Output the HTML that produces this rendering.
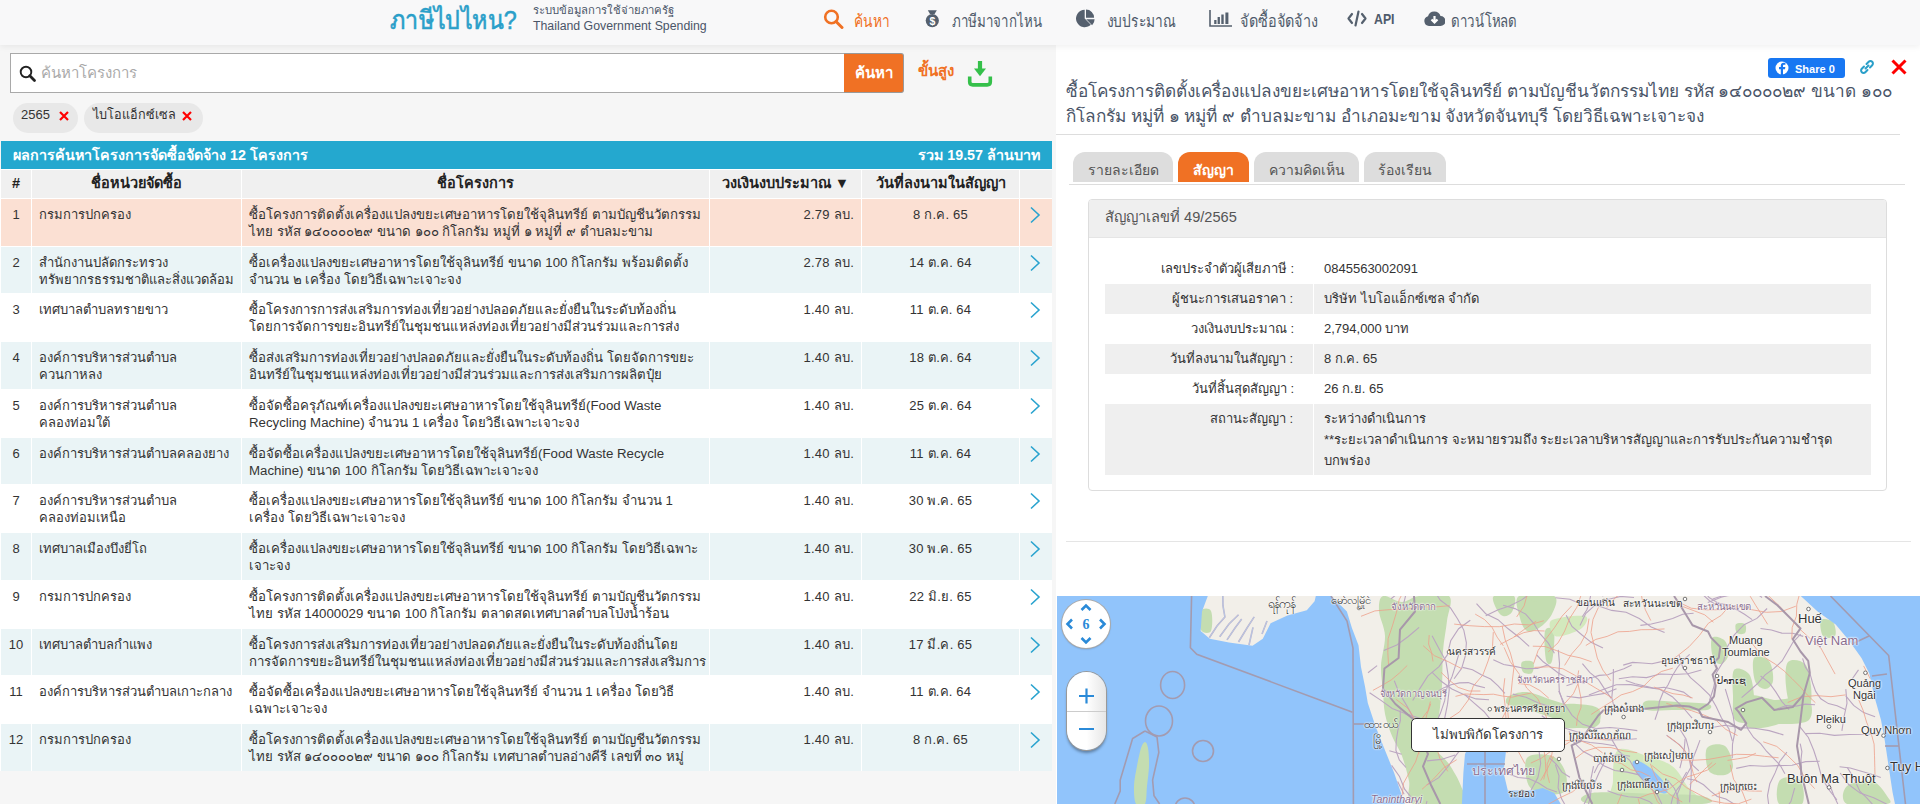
<!DOCTYPE html>
<html><head><meta charset="utf-8">
<style>
*{box-sizing:border-box}
html,body{margin:0;padding:0}
body{width:1920px;height:804px;overflow:hidden;position:relative;background:#f6f6f6;font-family:"Liberation Sans",sans-serif;color:#333}
.abs{position:absolute}
#hdr{position:absolute;left:0;top:0;width:1920px;height:45px;background:#f8f8f9;box-shadow:0 2px 6px rgba(0,0,0,.06);z-index:5}
.logo{position:absolute;left:390px;top:3px;font-size:26px;color:#2a9fc9;-webkit-text-stroke:.6px #2a9fc9;white-space:nowrap;line-height:34px;transform-origin:0 0;transform:scaleX(.895)}
.sub1{position:absolute;left:533px;top:1px;font-size:11.3px;color:#4a5568;white-space:nowrap;line-height:18px}
.sub2{position:absolute;left:533px;top:17px;font-size:12.3px;color:#4a5568;white-space:nowrap;line-height:18px}
.nav{position:absolute;top:0px;font-size:17px;line-height:22px;color:#4f5b6b;white-space:nowrap}
.nav svg{position:absolute;margin-top:8px}
.nav span{transform-origin:0 0;display:inline-block}
/* left */
#search{position:absolute;left:10px;top:53px;width:835px;height:40px;background:#fff;border:1px solid #a9a9a9}
#search .ph{position:absolute;left:30px;top:9px;font-size:15px;color:#aaa;line-height:20px;white-space:nowrap}
#sbtn{position:absolute;left:844px;top:53px;width:60px;height:40px;background:#f07124;color:#fff;font-size:15px;font-weight:bold;line-height:38px;text-align:center;border:1px solid #999;border-left:0;border-radius:0 3px 3px 0}
#adv{position:absolute;left:918px;top:61px;font-size:15px;font-weight:bold;color:#f07124;line-height:20px;white-space:nowrap}
.pill{position:absolute;top:103px;height:30px;border-radius:15px;background:#e8e8e8;font-size:13px;color:#333;line-height:24px;white-space:nowrap}
.pill svg{position:absolute}
#bar{position:absolute;left:1px;top:141px;width:1051px;height:28px;background:#24a8cf;color:#fff;font-weight:bold;font-size:14.3px;line-height:28px}
#thead{position:absolute;left:1px;top:170px;width:1051px;height:28px}
.th{position:absolute;top:0;height:28px;background:#f0f0f0;font-weight:bold;font-size:14.5px;line-height:26px;text-align:center;color:#222;white-space:nowrap}
.row{position:absolute;left:1px;width:1051px;height:46.73px}
.c{position:absolute;top:0;height:100%;font-size:13px;line-height:17px;padding-top:7px;white-space:nowrap;overflow:hidden;color:#333}
.c1{left:0;width:30px;text-align:center}
.c2{left:31px;width:209px;padding-left:7px}
.c3{left:241px;width:467px;padding-left:7px;font-size:13.25px}
.c4{left:709px;width:151px;text-align:right;padding-right:7px;letter-spacing:.25px}
.c5{left:861px;width:157px;text-align:center;letter-spacing:.2px}
.c6{left:1019px;width:32px}
.c6 svg{position:absolute;left:9px;top:7px}
.sel .c{background:#fbe0d3}
.even .c{background:#eaf4f6}
.odd .c{background:#fff}
/* right */
#right{position:absolute;left:1056px;top:45px;width:864px;height:759px;background:#fff;}
.title{position:absolute;left:10px;top:34px;font-size:17.2px;line-height:25px;color:#4a5568;white-space:nowrap}
.hr1{position:absolute;left:0;top:89px;width:844px;height:1px;background:#ddd}
.tab{position:absolute;top:107px;height:30px;border-radius:12px 12px 0 0;background:#ddd;color:#555;font-size:14px;text-align:center;line-height:37px;white-space:nowrap}
.tab.act{background:#f07124;color:#fff;font-weight:bold}
.tabline{position:absolute;left:13px;top:139px;width:836px;height:1px;background:#ddd}
#panel{position:absolute;left:32px;top:154px;width:799px;height:292px;border:1px solid #ddd;border-radius:4px;background:#fff;overflow:hidden}
#panel .ph{position:absolute;left:0;top:0;width:100%;height:38px;background:#efefef;border-bottom:1px solid #e5e5e5;font-size:14.6px;color:#555;line-height:34px;padding-left:16px;white-space:nowrap}
.kv{position:absolute;left:16px;width:766px;height:30px;font-size:13px;color:#333;line-height:30px}
.kv .k{position:absolute;left:0;width:209px;padding-right:20px;text-align:right;white-space:nowrap;top:0}
.kv .v{position:absolute;left:219px;white-space:nowrap;top:0}
.kv.g{background:#efefef}
.kv.g .k{border-right:1px solid #fff;height:100%}
.hr2{position:absolute;left:10px;top:496px;width:845px;height:1px;background:#e5e5e5}
.ml{position:absolute;white-space:nowrap;line-height:14px;text-shadow:0 0 2px #fff,0 0 2px #fff,0 0 2px #fff}
#map{position:absolute;left:1px;top:551px;width:863px;height:208px;overflow:hidden;background:#91c4fb}
</style></head><body>

<div id="hdr">
 <div class="logo">ภาษีไปไหน?</div>
 <div class="sub1">ระบบข้อมูลการใช้จ่ายภาครัฐ</div>
 <div class="sub2">Thailand Government Spending</div>

 <div class="nav" style="left:823px;color:#f07124">
  <svg style="left:0;top:1px" width="21" height="20" viewBox="0 0 21 20"><circle cx="8.5" cy="8" r="6.3" fill="none" stroke="#f07124" stroke-width="2.6"/><path d="M13 12.5 L19 18.5" stroke="#f07124" stroke-width="3" stroke-linecap="round"/></svg>
  <span style="position:absolute;left:31px;top:11px;transform:scaleX(.81)">ค้นหา</span>
 </div>
 <div class="nav" style="left:925px">
  <svg style="left:0;top:1px" width="15" height="19" viewBox="0 0 15 19"><path d="M2.8 1.2 H11.8 L9.6 5 H5 Z" fill="#55606e"/><circle cx="7.3" cy="11.6" r="6.6" fill="#55606e"/><text x="7.3" y="15.6" font-size="10.5" font-weight="bold" text-anchor="middle" fill="#fff" font-family="Liberation Sans">$</text></svg>
  <span style="position:absolute;left:27px;top:11px;transform:scaleX(.783)">ภาษีมาจากไหน</span>
 </div>
 <div class="nav" style="left:1076px">
  <svg style="left:0;top:1px" width="20" height="20" viewBox="0 0 20 20"><path d="M8.7 9.5 V0.8 A8.7 8.7 0 1 0 14.85 15.65 Z" fill="#55606e"/><path d="M10 8.7 V0.6 A8.1 8.1 0 0 1 18.1 8.7 Z" fill="#55606e"/><path d="M10.2 10.3 H18.6 A8.4 8.4 0 0 1 16.14 16.24 Z" fill="#55606e"/></svg>
  <span style="position:absolute;left:31px;top:11px;transform:scaleX(.81)">งบประมาณ</span>
 </div>
 <div class="nav" style="left:1209px">
  <svg style="left:0;top:1px" width="24" height="18" viewBox="0 0 24 18"><path d="M1 1 V17 H23" fill="none" stroke="#55606e" stroke-width="1.6"/><rect x="5.2" y="11" width="2.3" height="4" fill="#55606e"/><rect x="8.6" y="8" width="2.3" height="7" fill="#55606e"/><rect x="12.3" y="5.5" width="2.4" height="9.5" fill="#55606e"/><rect x="16.4" y="3.5" width="3" height="11.5" fill="#55606e"/></svg>
  <span style="position:absolute;left:31px;top:11px;transform:scaleX(.85)">จัดซื้อจัดจ้าง</span>
 </div>
 <div class="nav" style="left:1347px">
  <svg style="left:0;top:2px" width="20" height="17" viewBox="0 0 20 17"><path d="M5 4 L1.5 8.5 L5 13 M15 4 L18.5 8.5 L15 13 M11.5 1.5 L8.5 15.5" fill="none" stroke="#55606e" stroke-width="2.2" stroke-linecap="round" stroke-linejoin="round"/></svg>
  <span style="position:absolute;left:27px;top:8px;font-weight:bold;font-size:15px;transform:scaleX(.82)">API</span>
 </div>
 <div class="nav" style="left:1424px">
  <svg style="left:0;top:3px" width="21" height="15" viewBox="0 0 21 15"><path d="M5 15 A5 5 0 0 1 4 5.2 A6.5 6.5 0 0 1 16.5 5 A5 5 0 0 1 16.5 15 Z" fill="#55606e"/><path d="M10.5 5 V11 M7.5 8.5 L10.5 11.5 L13.5 8.5" fill="none" stroke="#fff" stroke-width="2.2"/></svg>
  <span style="position:absolute;left:27px;top:11px;transform:scaleX(.78)">ดาวน์โหลด</span>
 </div>
</div>

<!-- LEFT -->
<div id="search">
 <svg style="position:absolute;left:8px;top:11px" width="18" height="18" viewBox="0 0 18 18"><circle cx="7" cy="7" r="5.3" fill="none" stroke="#222" stroke-width="1.9"/><path d="M10.8 10.8 L15.5 15.5" stroke="#222" stroke-width="2.8" stroke-linecap="round"/></svg>
 <div class="ph">ค้นหาโครงการ</div>
</div>
<div id="sbtn">ค้นหา</div>
<div id="adv">ขั้นสูง</div>
<svg class="abs" style="left:966px;top:60px" width="28" height="28" viewBox="0 0 28 28"><rect x="11.9" y="1" width="4.2" height="9" fill="#35c04a"/><polygon points="8,8.5 20,8.5 14,16.3" fill="#35c04a"/><path d="M3.7 16.4 V21.8 Q3.7 24.9 6.8 24.9 H21.2 Q24.3 24.9 24.3 21.8 V16.4" fill="none" stroke="#35c04a" stroke-width="3.6"/></svg>

<div class="pill" style="left:13px;width:65px"><span style="position:absolute;left:8px;top:0px">2565</span>
 <svg style="left:46px;top:8px" width="10" height="10" viewBox="0 0 10 10"><path d="M1 1 L9 9 M9 1 L1 9" stroke="#f00" stroke-width="2.2"/></svg></div>
<div class="pill" style="left:84px;width:119px"><span style="position:absolute;left:9px;top:0px;font-size:12.7px">ไบโอแอ็กซ์เซล</span>
 <svg style="left:98px;top:8px" width="10" height="10" viewBox="0 0 10 10"><path d="M1 1 L9 9 M9 1 L1 9" stroke="#f00" stroke-width="2.2"/></svg></div>

<div id="bar"><span style="position:absolute;left:12px">ผลการค้นหาโครงการจัดซื้อจัดจ้าง 12 โครงการ</span><span style="position:absolute;right:12px">รวม 19.57 ล้านบาท</span></div>
<div class="abs" style="left:0;top:169px;width:1052px;height:602px;background:#fff"></div>
<div id="thead">
 <div class="th" style="left:0;width:30px">#</div>
 <div class="th" style="left:31px;width:209px">ชื่อหน่วยจัดซื้อ</div>
 <div class="th" style="left:241px;width:467px">ชื่อโครงการ</div>
 <div class="th" style="left:709px;width:151px">วงเงินงบประมาณ ▼</div>
 <div class="th" style="left:861px;width:157px">วันที่ลงนามในสัญญา</div>
 <div class="th" style="left:1019px;width:32px"></div>
</div>
<div class="row sel" style="top:199.00px">
<div class="c c1">1</div><div class="c c2">กรมการปกครอง</div><div class="c c3">ซื้อโครงการติดตั้งเครื่องแปลงขยะเศษอาหารโดยใช้จุลินทรีย์ ตามบัญชีนวัตกรรม<br>ไทย รหัส ๑๔๐๐๐๐๒๙ ขนาด ๑๐๐ กิโลกรัม หมู่ที่ ๑ หมู่ที่ ๙ ตำบลมะขาม</div><div class="c c4">2.79 ลบ.</div><div class="c c5">8 ก.ค. 65</div><div class="c c6"><svg width="12" height="18" viewBox="0 0 12 18"><path d="M2 1.5 L10 9 L2 16.5" fill="none" stroke="#29a3cf" stroke-width="1.6"/></svg></div>
</div>
<div class="row even" style="top:246.73px">
<div class="c c1">2</div><div class="c c2">สำนักงานปลัดกระทรวง<br>ทรัพยากรธรรมชาติและสิ่งแวดล้อม</div><div class="c c3">ซื้อเครื่องแปลงขยะเศษอาหารโดยใช้จุลินทรีย์ ขนาด 100 กิโลกรัม พร้อมติดตั้ง<br>จำนวน ๒ เครื่อง โดยวิธีเฉพาะเจาะจง</div><div class="c c4">2.78 ลบ.</div><div class="c c5">14 ต.ค. 64</div><div class="c c6"><svg width="12" height="18" viewBox="0 0 12 18"><path d="M2 1.5 L10 9 L2 16.5" fill="none" stroke="#29a3cf" stroke-width="1.6"/></svg></div>
</div>
<div class="row odd" style="top:294.46px">
<div class="c c1">3</div><div class="c c2">เทศบาลตำบลทรายขาว</div><div class="c c3">ซื้อโครงการการส่งเสริมการท่องเที่ยวอย่างปลอดภัยและยั่งยืนในระดับท้องถิ่น<br>โดยการจัดการขยะอินทรีย์ในชุมชนแหล่งท่องเที่ยวอย่างมีส่วนร่วมและการส่ง</div><div class="c c4">1.40 ลบ.</div><div class="c c5">11 ต.ค. 64</div><div class="c c6"><svg width="12" height="18" viewBox="0 0 12 18"><path d="M2 1.5 L10 9 L2 16.5" fill="none" stroke="#29a3cf" stroke-width="1.6"/></svg></div>
</div>
<div class="row even" style="top:342.19px">
<div class="c c1">4</div><div class="c c2">องค์การบริหารส่วนตำบล<br>ควนกาหลง</div><div class="c c3">ซื้อส่งเสริมการท่องเที่ยวอย่างปลอดภัยและยั่งยืนในระดับท้องถิ่น โดยจัดการขยะ<br>อินทรีย์ในชุมชนแหล่งท่องเที่ยวอย่างมีส่วนร่วมและการส่งเสริมการผลิตปุ๋ย</div><div class="c c4">1.40 ลบ.</div><div class="c c5">18 ต.ค. 64</div><div class="c c6"><svg width="12" height="18" viewBox="0 0 12 18"><path d="M2 1.5 L10 9 L2 16.5" fill="none" stroke="#29a3cf" stroke-width="1.6"/></svg></div>
</div>
<div class="row odd" style="top:389.92px">
<div class="c c1">5</div><div class="c c2">องค์การบริหารส่วนตำบล<br>คลองท่อมใต้</div><div class="c c3">ซื้อจัดซื้อครุภัณฑ์เครื่องแปลงขยะเศษอาหารโดยใช้จุลินทรีย์(Food Waste<br>Recycling Machine) จำนวน 1 เครื่อง โดยวิธีเฉพาะเจาะจง</div><div class="c c4">1.40 ลบ.</div><div class="c c5">25 ต.ค. 64</div><div class="c c6"><svg width="12" height="18" viewBox="0 0 12 18"><path d="M2 1.5 L10 9 L2 16.5" fill="none" stroke="#29a3cf" stroke-width="1.6"/></svg></div>
</div>
<div class="row even" style="top:437.65px">
<div class="c c1">6</div><div class="c c2">องค์การบริหารส่วนตำบลคลองยาง</div><div class="c c3">ซื้อจัดซื้อเครื่องแปลงขยะเศษอาหารโดยใช้จุลินทรีย์(Food Waste Recycle<br>Machine) ขนาด 100 กิโลกรัม โดยวิธีเฉพาะเจาะจง</div><div class="c c4">1.40 ลบ.</div><div class="c c5">11 ต.ค. 64</div><div class="c c6"><svg width="12" height="18" viewBox="0 0 12 18"><path d="M2 1.5 L10 9 L2 16.5" fill="none" stroke="#29a3cf" stroke-width="1.6"/></svg></div>
</div>
<div class="row odd" style="top:485.38px">
<div class="c c1">7</div><div class="c c2">องค์การบริหารส่วนตำบล<br>คลองท่อมเหนือ</div><div class="c c3">ซื้อเครื่องแปลงขยะเศษอาหารโดยใช้จุลินทรีย์ ขนาด 100 กิโลกรัม จำนวน 1<br>เครื่อง โดยวิธีเฉพาะเจาะจง</div><div class="c c4">1.40 ลบ.</div><div class="c c5">30 พ.ค. 65</div><div class="c c6"><svg width="12" height="18" viewBox="0 0 12 18"><path d="M2 1.5 L10 9 L2 16.5" fill="none" stroke="#29a3cf" stroke-width="1.6"/></svg></div>
</div>
<div class="row even" style="top:533.11px">
<div class="c c1">8</div><div class="c c2">เทศบาลเมืองบึงยี่โถ</div><div class="c c3">ซื้อเครื่องแปลงขยะเศษอาหารโดยใช้จุลินทรีย์ ขนาด 100 กิโลกรัม โดยวิธีเฉพาะ<br>เจาะจง</div><div class="c c4">1.40 ลบ.</div><div class="c c5">30 พ.ค. 65</div><div class="c c6"><svg width="12" height="18" viewBox="0 0 12 18"><path d="M2 1.5 L10 9 L2 16.5" fill="none" stroke="#29a3cf" stroke-width="1.6"/></svg></div>
</div>
<div class="row odd" style="top:580.84px">
<div class="c c1">9</div><div class="c c2">กรมการปกครอง</div><div class="c c3">ซื้อโครงการติดตั้งเครื่องแปลงขยะเศษอาหารโดยใช้จุลินทรีย์ ตามบัญชีนวัตกรรม<br>ไทย รหัส 14000029 ขนาด 100 กิโลกรัม ตลาดสดเทศบาลตำบลโป่งน้ำร้อน</div><div class="c c4">1.40 ลบ.</div><div class="c c5">22 มิ.ย. 65</div><div class="c c6"><svg width="12" height="18" viewBox="0 0 12 18"><path d="M2 1.5 L10 9 L2 16.5" fill="none" stroke="#29a3cf" stroke-width="1.6"/></svg></div>
</div>
<div class="row even" style="top:628.57px">
<div class="c c1">10</div><div class="c c2">เทศบาลตำบลกำแพง</div><div class="c c3">ซื้อโครงการส่งเสริมการท่องเที่ยวอย่างปลอดภัยและยั่งยืนในระดับท้องถิ่นโดย<br>การจัดการขยะอินทรีย์ในชุมชนแหล่งท่องเที่ยวอย่างมีส่วนร่วมและการส่งเสริมการ</div><div class="c c4">1.40 ลบ.</div><div class="c c5">17 มี.ค. 65</div><div class="c c6"><svg width="12" height="18" viewBox="0 0 12 18"><path d="M2 1.5 L10 9 L2 16.5" fill="none" stroke="#29a3cf" stroke-width="1.6"/></svg></div>
</div>
<div class="row odd" style="top:676.30px">
<div class="c c1">11</div><div class="c c2">องค์การบริหารส่วนตำบลเกาะกลาง</div><div class="c c3">ซื้อจัดซื้อเครื่องแปลงขยะเศษอาหารโดยใช้จุลินทรีย์ จำนวน 1 เครื่อง โดยวิธี<br>เฉพาะเจาะจง</div><div class="c c4">1.40 ลบ.</div><div class="c c5">11 ต.ค. 64</div><div class="c c6"><svg width="12" height="18" viewBox="0 0 12 18"><path d="M2 1.5 L10 9 L2 16.5" fill="none" stroke="#29a3cf" stroke-width="1.6"/></svg></div>
</div>
<div class="row even" style="top:724.03px">
<div class="c c1">12</div><div class="c c2">กรมการปกครอง</div><div class="c c3">ซื้อโครงการติดตั้งเครื่องแปลงขยะเศษอาหารโดยใช้จุลินทรีย์ ตามบัญชีนวัตกรรม<br>ไทย รหัส ๑๔๐๐๐๐๒๙ ขนาด ๑๐๐ กิโลกรัม เทศบาลตำบลอ่างคีรี เลขที่ ๓๐ หมู่</div><div class="c c4">1.40 ลบ.</div><div class="c c5">8 ก.ค. 65</div><div class="c c6"><svg width="12" height="18" viewBox="0 0 12 18"><path d="M2 1.5 L10 9 L2 16.5" fill="none" stroke="#29a3cf" stroke-width="1.6"/></svg></div>
</div>

<!-- RIGHT -->
<div id="right">
 <svg class="abs" style="left:712px;top:13px" width="77" height="20" viewBox="0 0 77 20"><rect width="77" height="20" rx="3" fill="#1877f2"/><circle cx="14" cy="10" r="6.5" fill="#fff"/><path d="M15 17 V11.3 H17 L17.3 9 H15 V7.8 C15 7.1 15.3 6.7 16.1 6.7 H17.4 V4.8 C17 4.7 16.3 4.7 15.7 4.7 C13.9 4.7 12.8 5.8 12.8 7.6 V9 H11 V11.3 H12.8 V17 Z" fill="#1877f2"/><text x="27" y="14.5" font-size="11" font-weight="bold" fill="#fff" font-family="Liberation Sans">Share 0</text></svg>
 <svg class="abs" style="left:803px;top:14px" width="16" height="16" viewBox="0 0 16 16"><path d="M6.5 9.5 L9.5 6.5 M5 7.5 L2.8 9.7 A2.4 2.4 0 0 0 6.3 13.2 L8.5 11 M7.5 5 L9.7 2.8 A2.4 2.4 0 0 1 13.2 6.3 L11 8.5" fill="none" stroke="#2a9fc9" stroke-width="2" stroke-linecap="round"/></svg>
 <svg class="abs" style="left:835px;top:14px" width="16" height="16" viewBox="0 0 16 16"><path d="M1.5 1.5 L14.5 14.5 M14.5 1.5 L1.5 14.5" stroke="#f00" stroke-width="3"/></svg>
 <div class="title">ซื้อโครงการติดตั้งเครื่องแปลงขยะเศษอาหารโดยใช้จุลินทรีย์ ตามบัญชีนวัตกรรมไทย รหัส ๑๔๐๐๐๐๒๙ ขนาด ๑๐๐<br>กิโลกรัม หมู่ที่ ๑ หมู่ที่ ๙ ตำบลมะขาม อำเภอมะขาม จังหวัดจันทบุรี โดยวิธีเฉพาะเจาะจง</div>
 <div class="hr1"></div>
 <div class="tab" style="left:17px;width:100px">รายละเอียด</div>
 <div class="tab act" style="left:122px;width:71px">สัญญา</div>
 <div class="tab" style="left:198px;width:105px">ความคิดเห็น</div>
 <div class="tab" style="left:308px;width:82px">ร้องเรียน</div>
 <div class="tabline"></div>
 <div id="panel">
  <div class="ph">สัญญาเลขที่ 49/2565</div>
  <div class="kv" style="top:54px"><div class="k">เลขประจำตัวผู้เสียภาษี :</div><div class="v">0845563002091</div></div>
  <div class="kv g" style="top:84px"><div class="k">ผู้ชนะการเสนอราคา :</div><div class="v">บริษัท ไบโอแอ็กซ์เซล จำกัด</div></div>
  <div class="kv" style="top:114px"><div class="k">วงเงินงบประมาณ :</div><div class="v">2,794,000 บาท</div></div>
  <div class="kv g" style="top:144px"><div class="k">วันที่ลงนามในสัญญา :</div><div class="v">8 ก.ค. 65</div></div>
  <div class="kv" style="top:174px"><div class="k">วันที่สิ้นสุดสัญญา :</div><div class="v">26 ก.ย. 65</div></div>
  <div class="kv g" style="top:204px;height:71px"><div class="k">สถานะสัญญา :</div><div class="v" style="line-height:21px;top:4px">ระหว่างดำเนินการ<br>**ระยะเวลาดำเนินการ จะหมายรวมถึง ระยะเวลาบริหารสัญญาและการรับประกันความชำรุด<br>บกพร่อง</div></div>
 </div>
 <div class="hr2"></div>
 <div id="map"><svg width="863" height="208" viewBox="0 0 863 208" style="position:absolute;left:0;top:0">
<rect width="863" height="208" fill="#f2efe9"/>
<path d="M326.0,0.0 C329.8,-1.5 339.0,6.0 345.0,6.0 C351.0,6.0 354.2,1.0 362.0,0.0 C369.8,-1.0 387.3,-4.2 392.0,0.0 C396.7,4.2 391.0,15.8 390.0,25.0 C389.0,34.2 386.8,44.2 386.0,55.0 C385.2,65.8 385.7,79.2 385.0,90.0 C384.3,100.8 383.2,110.0 382.0,120.0 C380.8,130.0 376.3,142.0 378.0,150.0 C379.7,158.0 387.7,161.3 392.0,168.0 C396.3,174.7 401.7,183.3 404.0,190.0 C406.3,196.7 414.0,205.0 406.0,208.0 C398.0,211.0 365.0,211.8 356.0,208.0 C347.0,204.2 353.8,193.0 352.0,185.0 C350.2,177.0 347.8,167.5 345.0,160.0 C342.2,152.5 337.8,147.0 335.0,140.0 C332.2,133.0 329.5,125.5 328.0,118.0 C326.5,110.5 326.7,103.0 326.0,95.0 C325.3,87.0 323.7,79.2 324.0,70.0 C324.3,60.8 328.3,49.2 328.0,40.0 C327.7,30.8 322.3,21.7 322.0,15.0 C321.7,8.3 322.2,1.5 326.0,0.0 Z" fill="#c4ddb1"/>
<path d="M437.0,0.0 C440.0,-2.0 454.0,-2.7 457.0,0.0 C460.0,2.7 456.8,12.7 455.0,16.0 C453.2,19.3 448.7,20.7 446.0,20.0 C443.3,19.3 440.5,15.3 439.0,12.0 C437.5,8.7 434.0,2.0 437.0,0.0 Z" fill="#c4ddb1"/>
<path d="M462.0,0.0 C467.7,-3.7 491.5,-3.0 497.0,0.0 C502.5,3.0 497.5,12.7 495.0,18.0 C492.5,23.3 486.2,29.2 482.0,32.0 C477.8,34.8 473.2,36.7 470.0,35.0 C466.8,33.3 464.3,27.8 463.0,22.0 C461.7,16.2 456.3,3.7 462.0,0.0 Z" fill="#c4ddb1"/>
<path d="M488.0,35.0 C489.3,30.3 495.8,31.0 497.0,36.0 C498.2,41.0 496.3,60.3 495.0,65.0 C493.7,69.7 490.2,69.0 489.0,64.0 C487.8,59.0 486.7,39.7 488.0,35.0 Z" fill="#c4ddb1"/>
<path d="M495.0,24.0 C500.3,21.0 523.0,18.7 528.0,20.0 C533.0,21.3 528.8,28.7 525.0,32.0 C521.2,35.3 509.8,39.0 505.0,40.0 C500.2,41.0 497.7,40.7 496.0,38.0 C494.3,35.3 489.7,27.0 495.0,24.0 Z" fill="#d3e9bd"/>
<path d="M465.0,66.0 C466.7,64.3 474.3,64.2 476.0,66.0 C477.7,67.8 476.7,75.3 475.0,77.0 C473.3,78.7 467.7,77.8 466.0,76.0 C464.3,74.2 463.3,67.7 465.0,66.0 Z" fill="#c4ddb1"/>
<path d="M452.0,100.0 C455.3,98.0 462.8,95.3 470.0,96.0 C477.2,96.7 486.7,101.3 495.0,104.0 C503.3,106.7 512.2,109.0 520.0,112.0 C527.8,115.0 539.0,119.0 542.0,122.0 C545.0,125.0 542.5,129.0 538.0,130.0 C533.5,131.0 523.0,129.7 515.0,128.0 C507.0,126.3 498.3,122.7 490.0,120.0 C481.7,117.3 471.7,114.0 465.0,112.0 C458.3,110.0 452.2,110.0 450.0,108.0 C447.8,106.0 448.7,102.0 452.0,100.0 Z" fill="#c4ddb1"/>
<path d="M503.0,111.0 C505.5,107.3 513.5,107.7 520.0,108.0 C526.5,108.3 538.7,109.3 542.0,113.0 C545.3,116.7 543.7,126.8 540.0,130.0 C536.3,133.2 525.8,132.0 520.0,132.0 C514.2,132.0 507.8,133.5 505.0,130.0 C502.2,126.5 500.5,114.7 503.0,111.0 Z" fill="#c4ddb1"/>
<path d="M561.0,154.0 C566.7,149.8 581.0,157.3 590.0,160.0 C599.0,162.7 608.3,165.0 615.0,170.0 C621.7,175.0 625.8,183.7 630.0,190.0 C634.2,196.3 651.7,205.0 640.0,208.0 C628.3,211.0 574.0,211.8 560.0,208.0 C546.0,204.2 555.8,194.0 556.0,185.0 C556.2,176.0 555.3,158.2 561.0,154.0 Z" fill="#d3e9bd"/>
<path d="M470.0,162.0 C473.8,157.0 488.7,157.8 495.0,160.0 C501.3,162.2 505.8,169.2 508.0,175.0 C510.2,180.8 511.0,191.2 508.0,195.0 C505.0,198.8 496.0,198.8 490.0,198.0 C484.0,197.2 475.3,196.0 472.0,190.0 C468.7,184.0 466.2,167.0 470.0,162.0 Z" fill="#c4ddb1"/>
<path d="M589.0,105.0 C594.0,103.7 609.7,105.5 620.0,106.0 C630.3,106.5 646.0,106.7 651.0,108.0 C656.0,109.3 655.2,113.0 650.0,114.0 C644.8,115.0 630.0,114.0 620.0,114.0 C610.0,114.0 595.2,115.5 590.0,114.0 C584.8,112.5 584.0,106.3 589.0,105.0 Z" fill="#c4ddb1"/>
<path d="M655.0,42.0 C657.0,39.2 665.3,42.0 668.0,45.0 C670.7,48.0 671.7,56.2 671.0,60.0 C670.3,63.8 666.5,67.7 664.0,68.0 C661.5,68.3 657.5,66.3 656.0,62.0 C654.5,57.7 653.0,44.8 655.0,42.0 Z" fill="#c4ddb1"/>
<path d="M677.0,74.0 C679.7,70.3 688.7,73.7 692.0,78.0 C695.3,82.3 696.3,92.3 697.0,100.0 C697.7,107.7 699.2,120.0 696.0,124.0 C692.8,128.0 681.3,128.0 678.0,124.0 C674.7,120.0 676.2,108.3 676.0,100.0 C675.8,91.7 674.3,77.7 677.0,74.0 Z" fill="#c4ddb1"/>
<path d="M697.0,62.0 C699.3,58.7 708.8,61.2 712.0,65.0 C715.2,68.8 716.7,80.3 716.0,85.0 C715.3,89.7 711.0,93.0 708.0,93.0 C705.0,93.0 699.8,90.2 698.0,85.0 C696.2,79.8 694.7,65.3 697.0,62.0 Z" fill="#c4ddb1"/>
<path d="M731.0,66.0 C734.2,62.3 744.2,64.0 748.0,68.0 C751.8,72.0 753.3,82.8 754.0,90.0 C754.7,97.2 755.2,107.5 752.0,111.0 C748.8,114.5 738.8,114.5 735.0,111.0 C731.2,107.5 729.7,97.5 729.0,90.0 C728.3,82.5 727.8,69.7 731.0,66.0 Z" fill="#c4ddb1"/>
<path d="M694.0,100.0 C698.2,96.7 710.7,104.0 720.0,104.0 C729.3,104.0 744.7,96.7 750.0,100.0 C755.3,103.3 757.0,119.3 752.0,124.0 C747.0,128.7 729.5,128.0 720.0,128.0 C710.5,128.0 699.3,128.7 695.0,124.0 C690.7,119.3 689.8,103.3 694.0,100.0 Z" fill="#c4ddb1"/>
<path d="M689.0,104.0 C693.3,99.7 706.0,104.0 715.0,104.0 C724.0,104.0 738.3,101.8 743.0,104.0 C747.7,106.2 747.7,112.7 743.0,117.0 C738.3,121.3 724.0,127.8 715.0,130.0 C706.0,132.2 693.3,134.3 689.0,130.0 C684.7,125.7 684.7,108.3 689.0,104.0 Z" fill="#c4ddb1"/>
<path d="M650.0,152.0 C652.7,147.8 663.7,147.0 668.0,150.0 C672.3,153.0 676.0,165.2 676.0,170.0 C676.0,174.8 672.0,178.2 668.0,179.0 C664.0,179.8 655.0,179.5 652.0,175.0 C649.0,170.5 647.3,156.2 650.0,152.0 Z" fill="#c4ddb1"/>
<path d="M723.0,184.0 C726.5,180.0 739.3,180.0 743.0,184.0 C746.7,188.0 748.5,204.0 745.0,208.0 C741.5,212.0 725.7,212.0 722.0,208.0 C718.3,204.0 719.5,188.0 723.0,184.0 Z" fill="#c4ddb1"/>
<path d="M535.0,197.0 C545.8,195.3 581.7,197.5 600.0,198.0 C618.3,198.5 637.5,198.3 645.0,200.0 C652.5,201.7 663.3,206.7 645.0,208.0 C626.7,209.3 553.3,209.8 535.0,208.0 C516.7,206.2 524.2,198.7 535.0,197.0 Z" fill="#c4ddb1"/>
<path d="M764.0,24.0 C765.7,21.7 773.7,23.3 776.0,26.0 C778.3,28.7 779.7,37.7 778.0,40.0 C776.3,42.3 768.3,42.7 766.0,40.0 C763.7,37.3 762.3,26.3 764.0,24.0 Z" fill="#c4ddb1"/>
<path d="M679.0,28.0 C680.3,26.5 686.5,26.5 688.0,28.0 C689.5,29.5 689.3,35.5 688.0,37.0 C686.7,38.5 681.5,38.5 680.0,37.0 C678.5,35.5 677.7,29.5 679.0,28.0 Z" fill="#c4ddb1"/>
<path d="M144.0,15.0 C145.7,11.8 152.3,11.7 154.0,15.0 C155.7,18.3 155.7,31.8 154.0,35.0 C152.3,38.2 145.7,37.3 144.0,34.0 C142.3,30.7 142.3,18.2 144.0,15.0 Z" fill="#c4ddb1"/>
<path d="M790.0,190.0 C794.2,186.2 808.3,183.3 815.0,185.0 C821.7,186.7 827.5,196.2 830.0,200.0 C832.5,203.8 836.7,206.7 830.0,208.0 C823.3,209.3 796.7,211.0 790.0,208.0 C783.3,205.0 785.8,193.8 790.0,190.0 Z" fill="#c4ddb1"/>
<path d="M470.0,0.0 C470.3,-1.0 478.7,-1.0 480.0,0.0 C481.3,1.0 479.7,6.0 478.0,6.0 C476.3,6.0 469.7,1.0 470.0,0.0 Z" fill="#c4ddb1"/>
<polygon points="0.0,0.0 150.8,0.0 145.0,15.5 143.7,35.0 152.8,42.7 172.0,46.6 195.5,49.8 205.8,42.7 213.6,27.2 230.4,19.4 249.8,14.2 257.6,5.2 258.8,0.0 274.4,0.0 289.9,15.5 295.0,32.3 301.5,49.2 304.0,71.0 308.0,90.6 310.8,107.0 318.5,130.3 327.7,153.4 337.0,176.5 347.8,208.0 0.0,208.0" fill="#91c4fb"/>
<polygon points="404.9,208.0 406.4,176.5 408.0,158.0 412.0,150.0 449.6,150.0 446.5,176.5 450.8,194.6 475.0,194.6 485.7,192.0 497.3,197.0 503.8,208.0" fill="#91c4fb"/>
<polygon points="743.8,0.0 760.6,15.5 778.7,28.4 791.6,44.0 804.5,62.0 812.3,77.6 817.5,101.0 824.0,124.0 827.8,144.8 831.7,170.7 835.6,196.5 838.0,208.0 863.0,208.0 863.0,0.0" fill="#91c4fb"/>
<ellipse cx="593" cy="181" rx="23" ry="7" transform="rotate(43 593 181)" fill="#91c4fb"/>
<path d="M88.0,146.0 C89.2,146.0 90.3,148.0 91.0,152.0 C91.7,156.0 92.2,163.7 92.0,170.0 C91.8,176.3 90.7,183.7 90.0,190.0 C89.3,196.3 89.8,205.0 88.0,208.0 C86.2,211.0 80.8,211.0 79.0,208.0 C77.2,205.0 76.8,196.3 77.0,190.0 C77.2,183.7 78.8,176.3 80.0,170.0 C81.2,163.7 82.7,156.0 84.0,152.0 C85.3,148.0 86.8,146.0 88.0,146.0 Z" fill="#c4ddb1"/>
<polyline points="152.3,41.8 160.0,30.0 167.9,20.9 166.0,10.0 165.8,0.0" fill="none" stroke="#bcaec6" stroke-width="1.6"/>
<polyline points="152.3,41.8 160.0,30.0 167.9,20.9 166.0,10.0 165.8,0.0" fill="none" stroke="#b4d3f2" stroke-width="0.7"/>
<polyline points="162.7,40.8 172.0,28.0 181.5,18.8" fill="none" stroke="#bcaec6" stroke-width="1.6"/>
<polyline points="162.7,40.8 172.0,28.0 181.5,18.8" fill="none" stroke="#b4d3f2" stroke-width="0.7"/>
<polyline points="170.0,43.9 178.0,32.0 184.7,23.0" fill="none" stroke="#bcaec6" stroke-width="1.6"/>
<polyline points="170.0,43.9 178.0,32.0 184.7,23.0" fill="none" stroke="#b4d3f2" stroke-width="0.7"/>
<polyline points="181.5,46.0 190.0,32.0 197.2,20.9" fill="none" stroke="#bcaec6" stroke-width="1.6"/>
<polyline points="181.5,46.0 190.0,32.0 197.2,20.9" fill="none" stroke="#b4d3f2" stroke-width="0.7"/>
<polyline points="192.0,49.0 196.0,31.4" fill="none" stroke="#bcaec6" stroke-width="1.6"/>
<polyline points="192.0,49.0 196.0,31.4" fill="none" stroke="#b4d3f2" stroke-width="0.7"/>
<polyline points="205.0,38.0 210.0,25.0" fill="none" stroke="#bcaec6" stroke-width="1.6"/>
<polyline points="205.0,38.0 210.0,25.0" fill="none" stroke="#b4d3f2" stroke-width="0.7"/>
<polyline points="762.7,165.3 748.6,165.6 735.1,169.3 721.0,169.6 707.0,170.2 692.9,169.5 679.2,172.4" fill="none" stroke="#bba6c1" stroke-width="1.1"/>
<polyline points="349.0,171.5 342.3,163.9 338.9,154.3 339.3,144.2 340.9,134.2 343.4,124.4 343.2,114.3" fill="none" stroke="#bba6c1" stroke-width="1.1"/>
<polyline points="334.1,2.8 344.9,-5.9 357.3,-12.0 368.8,-19.7" fill="none" stroke="#bba6c1" stroke-width="1.1"/>
<polyline points="580.3,134.6 566.5,132.8 552.7,131.5 538.9,132.6 525.6,128.3 515.1,119.3 507.4,107.7 501.7,95.0" fill="none" stroke="#bba6c1" stroke-width="1.1"/>
<polyline points="577.0,1.5 563.7,0.4 550.7,3.4 538.5,8.6 528.7,17.6 523.0,29.6" fill="none" stroke="#bba6c1" stroke-width="1.1"/>
<polyline points="553.8,208.7 549.4,215.4 544.3,221.6 538.0,226.5 532.6,232.5 529.6,239.8 527.5,247.6 522.7,254.0 516.8,259.4" fill="none" stroke="#bba6c1" stroke-width="1.1"/>
<polyline points="681.8,-2.6 673.1,-0.6 664.2,0.2 655.7,3.1" fill="none" stroke="#bba6c1" stroke-width="1.1"/>
<polyline points="695.2,23.6 687.5,18.3 679.5,13.6 670.5,10.8 661.3,9.7 653.1,5.2 646.2,-1.0 638.4,-6.2" fill="none" stroke="#bba6c1" stroke-width="1.1"/>
<polyline points="512.9,181.3 504.9,176.1 499.5,168.4 492.5,162.0" fill="none" stroke="#bba6c1" stroke-width="1.1"/>
<polyline points="629.6,176.0 625.6,183.0 623.4,190.8 620.3,198.2 620.3,206.3 621.1,214.3" fill="none" stroke="#bba6c1" stroke-width="1.1"/>
<polyline points="610.3,183.9 617.5,192.5 621.5,202.9 622.8,214.0 626.3,224.6 632.3,234.0 636.4,244.4 636.7,255.6" fill="none" stroke="#bba6c1" stroke-width="1.1"/>
<polyline points="509.6,100.2 522.3,101.9 534.9,99.5 547.6,97.4 559.5,92.8" fill="none" stroke="#bba6c1" stroke-width="1.1"/>
<polyline points="622.1,59.0 625.8,71.4 633.5,81.7 643.3,90.2 652.6,99.2 659.1,110.4 664.5,122.1 671.9,132.7 675.4,145.2" fill="none" stroke="#bba6c1" stroke-width="1.1"/>
<polyline points="337.3,84.7 342.1,97.0 349.0,108.4 355.5,119.9 357.4,133.0" fill="none" stroke="#bba6c1" stroke-width="1.1"/>
<polyline points="781.1,208.7 776.7,199.2 772.9,189.3 766.6,181.0" fill="none" stroke="#bba6c1" stroke-width="1.1"/>
<polyline points="556.4,72.9 556.2,87.4 554.8,101.8 558.3,115.8" fill="none" stroke="#bba6c1" stroke-width="1.1"/>
<polyline points="472.2,212.9 483.7,219.3 493.7,227.7 500.6,238.9" fill="none" stroke="#bba6c1" stroke-width="1.1"/>
<polyline points="370.0,205.0 366.8,217.8 363.9,230.6 365.4,243.7 363.2,256.7 356.6,268.1 354.6,281.1 352.6,294.1 355.8,306.9" fill="none" stroke="#bba6c1" stroke-width="1.1"/>
<polyline points="614.6,127.7 623.4,133.9 629.0,142.9 631.8,153.3 632.5,163.9 634.3,174.4 634.0,185.1 633.1,195.8 632.6,206.4" fill="none" stroke="#bba6c1" stroke-width="1.1"/>
<polyline points="705.1,1.5 698.1,-3.5 690.2,-6.9 683.0,-11.5 675.7,-16.1 668.9,-21.3 664.2,-28.5 658.2,-34.6" fill="none" stroke="#bba6c1" stroke-width="1.1"/>
<polyline points="377.3,128.4 367.3,125.1 356.9,123.0 347.8,117.6" fill="none" stroke="#bba6c1" stroke-width="1.1"/>
<polyline points="476.6,140.2 481.8,153.4 483.7,167.5 480.9,181.5 474.1,194.0" fill="none" stroke="#bba6c1" stroke-width="1.1"/>
<polyline points="413.3,24.3 401.6,32.7 393.7,44.8 390.3,58.9 382.0,70.6 370.9,79.9 363.1,92.1 355.7,104.5" fill="none" stroke="#bba6c1" stroke-width="1.1"/>
<polyline points="506.6,108.4 502.3,95.2 501.7,81.4 502.5,67.6 501.3,53.9" fill="none" stroke="#bba6c1" stroke-width="1.1"/>
<polyline points="628.1,142.9 627.3,152.8 625.3,162.5 622.9,172.2" fill="none" stroke="#bba6c1" stroke-width="1.1"/>
<polyline points="545.6,0.4 548.2,-8.2 548.2,-17.1 545.1,-25.5 542.8,-34.2 540.2,-42.7 538.4,-51.5 537.8,-60.4 539.4,-69.3" fill="none" stroke="#bba6c1" stroke-width="1.1"/>
<polyline points="407.6,98.6 417.2,107.1 426.9,115.5 435.0,125.3" fill="none" stroke="#bba6c1" stroke-width="1.1"/>
<polyline points="720.4,112.7 729.5,109.5 739.1,110.1 748.4,108.1 758.0,108.8" fill="none" stroke="#bba6c1" stroke-width="1.1"/>
<polyline points="347.1,198.3 340.6,185.5" fill="none" stroke="#bba6c1" stroke-width="1.1"/>
<polyline points="652.4,104.6 656.8,91.0 659.2,77.0 666.7,65.0 670.1,51.2 677.3,38.9 687.1,28.7 699.9,22.4 710.1,12.5" fill="none" stroke="#bba6c1" stroke-width="1.1"/>
<polyline points="829.5,208.1 816.7,201.7 803.1,197.1 791.7,188.5 783.2,177.0" fill="none" stroke="#bba6c1" stroke-width="1.1"/>
<polyline points="320.1,69.6 311.0,76.8" fill="none" stroke="#bba6c1" stroke-width="1.1"/>
<polyline points="334.6,169.4 342.5,180.5 347.6,193.2 356.2,203.9 367.3,211.7" fill="none" stroke="#bba6c1" stroke-width="1.1"/>
<polyline points="579.8,142.8 565.6,143.8 551.3,143.9 537.1,141.9 523.7,137.0 510.0,132.8 496.5,127.9 484.8,119.7" fill="none" stroke="#bba6c1" stroke-width="1.1"/>
<polyline points="582.3,178.9 570.1,176.1 557.8,174.5 546.3,169.5 537.0,161.2 526.0,155.3 517.1,146.6 512.0,135.2" fill="none" stroke="#bba6c1" stroke-width="1.1"/>
<polyline points="568.7,84.6 578.1,87.8 587.8,90.0 597.4,92.4 607.2,91.3 616.9,93.5 626.5,96.1 634.4,102.1" fill="none" stroke="#bba6c1" stroke-width="1.1"/>
<polyline points="673.1,9.4 661.9,7.4 652.1,1.5 644.8,-7.3" fill="none" stroke="#bba6c1" stroke-width="1.1"/>
<polyline points="566.2,69.1 575.6,66.4 585.3,67.0 595.0,67.8 604.5,65.6 613.8,62.8" fill="none" stroke="#bba6c1" stroke-width="1.1"/>
<polyline points="369.9,164.9 384.3,163.4 398.1,158.9" fill="none" stroke="#bba6c1" stroke-width="1.1"/>
<polyline points="432.0,103.7 419.0,102.9 406.7,98.5 394.9,92.9 384.2,85.3 374.9,76.1" fill="none" stroke="#bba6c1" stroke-width="1.1"/>
<polyline points="641.8,174.9 635.9,169.3 631.8,162.2 628.0,155.0 622.6,148.9 616.0,144.1 609.5,139.1" fill="none" stroke="#bba6c1" stroke-width="1.1"/>
<polyline points="737.7,191.8 734.0,205.3 726.0,216.8 720.9,229.8 711.1,239.8 698.7,246.3 688.7,256.1 680.9,267.8" fill="none" stroke="#bba6c1" stroke-width="1.1"/>
<polyline points="509.5,89.8 517.6,87.0 526.1,85.5 534.0,82.0 542.2,79.4 550.8,78.8 558.8,75.5 566.9,72.7 574.7,69.0" fill="none" stroke="#bba6c1" stroke-width="1.1"/>
<polyline points="573.1,160.3 564.4,158.8 555.6,159.5 547.6,163.2 541.1,169.1 537.2,177.0" fill="none" stroke="#bba6c1" stroke-width="1.1"/>
<polyline points="788.8,99.9 796.6,109.4 806.6,116.6 818.1,120.8" fill="none" stroke="#bba6c1" stroke-width="1.1"/>
<polyline points="549.5,161.7 545.7,169.5 541.8,177.2 538.3,185.2 534.2,192.8 533.3,201.4 531.0,209.8 526.6,217.2 524.1,225.5" fill="none" stroke="#bba6c1" stroke-width="1.1"/>
<polyline points="499.9,196.0 490.0,192.5 481.1,186.8 471.5,182.5 461.1,181.5 451.3,177.7" fill="none" stroke="#bba6c1" stroke-width="1.1"/>
<polyline points="607.6,36.6 594.2,30.9 582.3,22.5 569.1,16.3 554.7,14.4 540.9,9.7 526.3,9.0 512.9,3.3 498.4,1.7" fill="none" stroke="#bba6c1" stroke-width="1.1"/>
<polyline points="675.2,162.3 675.5,148.1 678.3,134.2 676.2,120.2 672.4,106.6 668.3,93.0" fill="none" stroke="#bba6c1" stroke-width="1.1"/>
<polyline points="326.8,54.5 339.8,48.9 351.3,40.5 362.1,31.3" fill="none" stroke="#bba6c1" stroke-width="1.1"/>
<polyline points="510.4,213.0 504.6,202.8 501.1,191.6 502.0,179.9 498.4,168.7" fill="none" stroke="#bba6c1" stroke-width="1.1"/>
<polyline points="428.0,91.7 419.5,89.6 411.3,86.6 402.5,86.9 394.0,88.8 386.0,92.3 378.4,96.8 370.7,101.0" fill="none" stroke="#bba6c1" stroke-width="1.1"/>
<polyline points="606.7,211.9 600.2,198.7 589.7,188.3 580.0,177.2 572.7,164.3 561.4,154.8 554.0,142.1" fill="none" stroke="#bba6c1" stroke-width="1.1"/>
<polyline points="823.8,181.5 813.8,178.0 803.5,175.0 793.2,172.0 782.6,170.8" fill="none" stroke="#bba6c1" stroke-width="1.1"/>
<polyline points="497.4,57.3 491.1,46.9 483.0,37.7 476.7,27.3 468.7,18.1 457.9,12.6 446.1,9.3" fill="none" stroke="#bba6c1" stroke-width="1.1"/>
<polyline points="520.8,144.2 533.0,146.5 545.3,147.7 557.6,149.8" fill="none" stroke="#bba6c1" stroke-width="1.1"/>
<polyline points="531.9,99.1 545.5,93.8 559.2,88.7 573.9,88.6 588.2,91.1 602.7,93.3 615.3,100.7 625.6,111.0 635.1,122.2" fill="none" stroke="#bba6c1" stroke-width="1.1"/>
<polyline points="525.3,20.7 529.9,13.7 532.4,5.8 534.0,-2.4" fill="none" stroke="#bba6c1" stroke-width="1.1"/>
<polyline points="546.0,52.1 534.6,46.6 524.7,38.7 515.0,30.5 509.2,19.2" fill="none" stroke="#bba6c1" stroke-width="1.1"/>
<polyline points="428.7,19.8 440.6,14.1 453.0,9.7 464.7,3.9 475.3,-4.0 486.8,-10.2" fill="none" stroke="#bba6c1" stroke-width="1.1"/>
<polyline points="402.6,55.7 398.9,68.1 395.1,80.4 389.8,92.2 387.6,104.9 383.5,117.1 378.2,128.9 377.8,141.7" fill="none" stroke="#bba6c1" stroke-width="1.1"/>
<polyline points="636.6,17.3 625.7,18.2 615.6,22.6 605.0,25.5 594.3,28.0 583.4,29.4" fill="none" stroke="#bba6c1" stroke-width="1.1"/>
<polyline points="491.2,68.7 480.4,72.4 469.1,72.8 457.9,70.4 446.7,68.5 436.3,63.8" fill="none" stroke="#bba6c1" stroke-width="1.1"/>
<polyline points="703.6,80.0 712.3,86.9 718.8,95.9 724.7,105.3 732.0,113.7" fill="none" stroke="#bba6c1" stroke-width="1.1"/>
<polyline points="399.3,137.5 387.0,131.2 374.0,126.7 361.2,121.7 348.1,117.4 335.2,112.4 324.0,104.4 312.6,96.7" fill="none" stroke="#bba6c1" stroke-width="1.1"/>
<polyline points="415.2,139.3 423.2,142.3 430.5,146.7" fill="none" stroke="#bba6c1" stroke-width="1.1"/>
<polyline points="418.1,138.3 407.9,148.1 399.1,159.2 390.9,170.7 381.8,181.6 369.7,189.1" fill="none" stroke="#bba6c1" stroke-width="1.1"/>
<polyline points="536.5,170.1 533.7,184.2 532.0,198.5 525.5,211.3 515.4,221.6 507.5,233.6 501.0,246.4 495.9,259.9 492.3,273.8" fill="none" stroke="#bba6c1" stroke-width="1.1"/>
<polyline points="729.9,156.1 722.5,165.7 718.1,176.9 712.8,187.8 710.5,199.6 712.1,211.6 714.1,223.5" fill="none" stroke="#bba6c1" stroke-width="1.1"/>
<polyline points="419.5,7.6 428.7,17.7 441.0,23.7 451.2,32.8 462.0,41.2 472.2,50.3" fill="none" stroke="#bba6c1" stroke-width="1.1"/>
<polyline points="345.4,12.8 348.6,-0.3 347.3,-13.8 347.5,-27.3 343.8,-40.3 342.8,-53.8" fill="none" stroke="#bba6c1" stroke-width="1.1"/>
<polyline points="684.6,101.6 692.9,94.5 701.0,87.1 708.1,78.8 717.1,72.4 725.1,65.0 730.6,55.5 736.1,46.0 743.7,38.1" fill="none" stroke="#bba6c1" stroke-width="1.1"/>
<polyline points="794.1,84.5 801.5,73.9" fill="none" stroke="#bba6c1" stroke-width="1.1"/>
<polyline points="779.9,203.8 771.3,193.0 764.6,180.8 761.0,167.5 756.7,154.3 751.4,141.5 742.8,130.7" fill="none" stroke="#bba6c1" stroke-width="1.1"/>
<polyline points="643.0,144.1 639.8,152.7 636.4,161.2 634.6,170.1 630.2,178.1 625.9,186.2 620.2,193.3 615.7,201.3 613.6,210.2" fill="none" stroke="#bba6c1" stroke-width="1.1"/>
<polyline points="706.7,-1.3 692.4,-3.0 678.0,-2.6 664.2,1.3 650.8,6.6" fill="none" stroke="#bba6c1" stroke-width="1.1"/>
<polyline points="687.3,124.7 691.2,133.5 696.6,141.5 703.8,147.8 709.7,155.5 716.6,162.3 723.2,169.3 727.9,177.7" fill="none" stroke="#bba6c1" stroke-width="1.1"/>
<polyline points="561.8,82.8 575.6,80.7 589.5,81.6 603.0,78.0 617.0,78.5 631.0,77.8 644.4,74.0" fill="none" stroke="#bba6c1" stroke-width="1.1"/>
<polyline points="507.9,110.0 494.3,111.1 481.4,106.9 469.0,101.2 455.8,98.1" fill="none" stroke="#bba6c1" stroke-width="1.1"/>
<polyline points="788.8,93.1 790.0,107.2 787.0,121.0 784.9,134.9" fill="none" stroke="#bba6c1" stroke-width="1.1"/>
<polyline points="790.4,171.6 795.1,179.2 799.1,187.3 803.0,195.5 809.5,201.7 815.6,208.4" fill="none" stroke="#bba6c1" stroke-width="1.1"/>
<polyline points="743.6,179.5 744.5,171.5 744.0,163.5 744.9,155.6 743.2,147.7" fill="none" stroke="#bba6c1" stroke-width="1.1"/>
<polyline points="344.7,158.2 332.4,154.7" fill="none" stroke="#bba6c1" stroke-width="1.1"/>
<polyline points="746.2,40.4 735.8,37.3 724.8,37.1 714.4,34.0 703.5,32.5" fill="none" stroke="#bba6c1" stroke-width="1.1"/>
<polyline points="600.5,212.4 592.2,205.4 582.1,201.5 571.3,200.7 560.7,198.5 550.5,194.7" fill="none" stroke="#bba6c1" stroke-width="1.1"/>
<polyline points="748.1,137.6 762.8,137.3 777.4,139.4 792.2,138.5 806.9,138.3 821.7,137.7" fill="none" stroke="#bba6c1" stroke-width="1.1"/>
<polyline points="632.7,58.3 625.7,64.7 619.9,72.2 615.1,80.3 611.1,88.8 605.9,96.8 602.4,105.5 601.0,114.9 598.0,123.8" fill="none" stroke="#bba6c1" stroke-width="1.1"/>
<polyline points="447.9,97.4 441.1,89.9 433.6,83.0 424.3,78.8 415.5,73.7 405.6,71.4" fill="none" stroke="#bba6c1" stroke-width="1.1"/>
<polyline points="397.1,82.7 404.7,72.2 408.4,59.7 409.4,46.8 406.8,34.1 400.5,22.8 393.5,11.9 383.2,4.0 376.1,-6.8" fill="none" stroke="#bba6c1" stroke-width="1.1"/>
<polyline points="375.1,39.8 381.9,52.6 388.9,65.3 391.2,79.6 392.2,94.0 390.5,108.4 387.6,122.6" fill="none" stroke="#bba6c1" stroke-width="1.1"/>
<polyline points="726.4,138.9 712.2,134.6 697.5,132.2 682.7,131.6 668.0,129.3 653.3,131.7" fill="none" stroke="#bba6c1" stroke-width="1.1"/>
<polyline points="479.7,59.0 486.2,65.8 493.8,71.3 501.3,77.0 509.7,81.5 518.8,84.0 527.6,87.4" fill="none" stroke="#bba6c1" stroke-width="1.1"/>
<polyline points="685.2,210.1 676.6,207.7 668.9,203.1 660.3,200.4 653.2,194.9 646.6,188.8 638.8,184.3 630.0,182.7" fill="none" stroke="#bba6c1" stroke-width="1.1"/>
<polyline points="525.4,67.7 532.7,76.4 541.5,83.6 547.7,93.1 554.2,102.4" fill="none" stroke="#bba6c1" stroke-width="1.1"/>
<polyline points="788.2,113.5 780.1,109.7 771.4,107.6 763.8,102.8 758.7,95.4 755.6,87.0 753.2,78.4 748.3,70.9 745.6,62.4" fill="none" stroke="#bba6c1" stroke-width="1.1"/>
<polyline points="496.4,160.3 490.4,172.8 483.6,184.7" fill="none" stroke="#eea08a" stroke-width="0.8"/>
<polyline points="757.6,192.6 748.0,182.0 740.8,169.6 730.6,159.6 719.7,150.4 706.2,145.8" fill="none" stroke="#eea08a" stroke-width="0.8"/>
<polyline points="607.5,32.9 595.9,33.6 584.2,33.7 572.6,35.4 560.9,35.8 550.1,40.4 538.8,43.4 528.8,49.5" fill="none" stroke="#eea08a" stroke-width="0.8"/>
<polyline points="553.8,84.7 545.9,74.1 540.3,62.1 537.2,49.3 534.0,36.5 536.0,23.4 541.4,11.4" fill="none" stroke="#eea08a" stroke-width="0.8"/>
<polyline points="534.3,118.4 544.3,111.9 554.4,105.7 564.1,98.9 575.5,95.6 586.3,90.6 594.7,82.2 604.4,75.5 615.8,72.2" fill="none" stroke="#eea08a" stroke-width="0.8"/>
<polyline points="473.8,167.1 484.4,162.2 493.7,155.3 504.6,151.1 514.4,144.8 525.6,141.7 537.1,142.9 548.7,143.9 560.1,141.3" fill="none" stroke="#eea08a" stroke-width="0.8"/>
<polyline points="654.7,200.0 666.7,195.5 679.3,193.3 692.0,194.9 704.9,195.2" fill="none" stroke="#eea08a" stroke-width="0.8"/>
<polyline points="734.8,43.3 735.2,31.4 739.4,20.2 739.8,8.3 742.9,-3.3 742.5,-15.2 742.5,-27.2 746.7,-38.4" fill="none" stroke="#eea08a" stroke-width="0.8"/>
<polyline points="693.2,0.2 698.9,9.7 704.9,19.0 710.7,28.4" fill="none" stroke="#eea08a" stroke-width="0.8"/>
<polyline points="616.2,5.0 626.2,10.7 636.9,14.7 647.7,18.8 656.4,26.2" fill="none" stroke="#eea08a" stroke-width="0.8"/>
<polyline points="674.0,7.9 664.2,19.4 651.3,27.3 642.3,39.6 632.1,50.7 620.2,60.1 607.9,69.0" fill="none" stroke="#eea08a" stroke-width="0.8"/>
<polyline points="527.0,186.6 515.5,195.8 502.2,202.2 489.4,209.4 478.9,219.8 466.0,226.7 455.6,237.3 443.9,246.1 433.9,256.9" fill="none" stroke="#eea08a" stroke-width="0.8"/>
<polyline points="658.9,167.3 650.5,174.0 640.6,177.7 630.4,180.8 621.1,186.0 612.7,192.6 602.6,196.0 592.2,198.0 582.3,201.9" fill="none" stroke="#eea08a" stroke-width="0.8"/>
<polyline points="549.9,11.6 558.8,1.2 570.5,-5.7 578.7,-16.7 587.6,-27.1 596.8,-37.2 605.4,-47.8 614.6,-58.0 620.7,-70.2" fill="none" stroke="#eea08a" stroke-width="0.8"/>
<polyline points="450.7,114.5 451.6,125.2 448.3,135.4 449.0,146.1 450.1,156.8" fill="none" stroke="#eea08a" stroke-width="0.8"/>
<polyline points="801.8,104.0 806.3,114.8 809.5,126.0 814.0,136.8 817.1,148.1 817.5,159.8 817.8,171.5 818.1,183.2" fill="none" stroke="#eea08a" stroke-width="0.8"/>
<polyline points="581.1,202.4 584.6,215.8 591.4,227.7 597.2,240.2 605.6,251.2 614.4,261.8 620.7,274.1 624.1,287.4 624.3,301.2" fill="none" stroke="#eea08a" stroke-width="0.8"/>
<polyline points="593.8,180.9 584.1,176.1 573.6,173.7 564.6,167.6 554.1,165.1" fill="none" stroke="#eea08a" stroke-width="0.8"/>
<polyline points="397.2,28.1 412.2,29.7 427.3,30.6 442.4,30.7 457.3,28.0 472.4,28.9 486.9,24.7" fill="none" stroke="#eea08a" stroke-width="0.8"/>
<polyline points="593.3,167.6 597.9,179.7 604.2,191.1 614.2,199.4 625.3,206.1" fill="none" stroke="#eea08a" stroke-width="0.8"/>
<polyline points="721.6,161.8 707.5,160.3 693.4,158.6 679.3,158.3 665.3,160.9 651.4,163.4 637.2,164.2 623.1,163.9" fill="none" stroke="#eea08a" stroke-width="0.8"/>
<polyline points="521.7,74.4 520.2,83.7 522.1,93.0 524.0,102.2 524.0,111.6 520.5,120.4 519.5,129.7" fill="none" stroke="#eea08a" stroke-width="0.8"/>
<polyline points="461.0,87.5 472.6,88.8 482.9,94.5 491.8,102.2" fill="none" stroke="#eea08a" stroke-width="0.8"/>
<polyline points="459.7,20.9 467.1,9.9 470.6,-2.9 471.3,-16.2 469.9,-29.4 473.2,-42.3 480.6,-53.3 485.3,-65.7 486.5,-78.9" fill="none" stroke="#eea08a" stroke-width="0.8"/>
<polyline points="331.6,69.8 330.8,56.3 331.1,42.7 335.4,29.9 339.3,16.9 342.2,3.7 348.5,-8.3 353.6,-20.8" fill="none" stroke="#eea08a" stroke-width="0.8"/>
<polyline points="487.6,35.0 477.1,34.6 466.8,36.6 457.2,40.9" fill="none" stroke="#eea08a" stroke-width="0.8"/>
<polyline points="555.2,101.9 542.9,94.5 530.6,87.2 518.5,79.6 505.9,72.8 491.7,70.8 477.4,71.4" fill="none" stroke="#eea08a" stroke-width="0.8"/>
<polyline points="580.2,156.7 567.0,154.9 554.0,151.6 540.7,151.3 527.9,155.2 517.3,163.2" fill="none" stroke="#eea08a" stroke-width="0.8"/>
<polyline points="494.3,161.9 496.7,146.6 493.3,131.4 487.7,116.9 480.8,102.9 469.7,92.0 462.4,78.3 453.3,65.7 447.1,51.4" fill="none" stroke="#eea08a" stroke-width="0.8"/>
<polyline points="463.2,127.5 450.2,131.9 437.2,136.1 426.0,143.9" fill="none" stroke="#eea08a" stroke-width="0.8"/>
<polyline points="593.8,24.6 588.4,13.9 585.0,2.5 583.2,-9.4 578.2,-20.2 570.8,-29.6 561.8,-37.6" fill="none" stroke="#eea08a" stroke-width="0.8"/>
<polyline points="373.8,107.7 369.7,119.1 366.8,130.9 362.8,142.4 362.3,154.5 358.5,166.0 352.4,176.6 346.5,187.2 345.2,199.3" fill="none" stroke="#eea08a" stroke-width="0.8"/>
<polyline points="662.1,195.4 662.7,206.4 661.9,217.5 657.3,227.5 649.9,235.8 644.4,245.4 637.9,254.4 634.6,265.0 632.0,275.8" fill="none" stroke="#eea08a" stroke-width="0.8"/>
<polyline points="564.6,197.9 559.9,209.5 558.0,221.7 552.0,232.7 548.9,244.7 543.2,255.8 538.9,267.5" fill="none" stroke="#eea08a" stroke-width="0.8"/>
<polyline points="350.2,69.5 342.6,76.9 334.4,83.8 325.2,89.3 315.9,94.4" fill="none" stroke="#eea08a" stroke-width="0.8"/>
<polyline points="365.0,193.3 376.4,183.1 386.7,171.8 399.7,163.7" fill="none" stroke="#eea08a" stroke-width="0.8"/>
<polyline points="475.8,50.2 488.1,50.5 499.6,54.6 511.0,59.3 523.0,61.8 534.6,65.8" fill="none" stroke="#eea08a" stroke-width="0.8"/>
<polyline points="507.6,69.4 514.7,57.9 523.6,47.8 529.9,35.9 532.0,22.6" fill="none" stroke="#eea08a" stroke-width="0.8"/>
<polyline points="521.9,85.6 516.4,97.7 507.5,107.7 499.5,118.4" fill="none" stroke="#eea08a" stroke-width="0.8"/>
<polyline points="373.4,105.5 371.0,114.5 365.5,121.9 362.2,130.6 361.2,139.8 362.2,149.1 361.8,158.3" fill="none" stroke="#eea08a" stroke-width="0.8"/>
<polyline points="800.3,208.6 812.9,209.3 824.8,213.5 835.6,220.2 848.0,222.9" fill="none" stroke="#eea08a" stroke-width="0.8"/>
<polyline points="673.2,168.7 676.6,183.4 685.4,195.9 690.8,210.0 699.5,222.6 709.1,234.3 721.5,243.0 735.7,248.4" fill="none" stroke="#eea08a" stroke-width="0.8"/>
<polyline points="635.7,102.0 626.0,99.0 616.0,97.7 606.4,94.5 596.9,91.0" fill="none" stroke="#eea08a" stroke-width="0.8"/>
<polyline points="495.6,148.9 508.4,144.6 521.9,144.2 534.6,149.0 545.6,156.9" fill="none" stroke="#eea08a" stroke-width="0.8"/>
<polyline points="758.4,106.7 750.3,99.0 743.0,90.6 735.1,82.7 727.1,74.9 718.2,68.1 708.8,62.2 700.6,54.5 693.8,45.7" fill="none" stroke="#eea08a" stroke-width="0.8"/>
<polyline points="476.5,67.8 481.1,54.5 488.9,42.9 497.4,31.8 505.1,20.1 514.7,9.9" fill="none" stroke="#eea08a" stroke-width="0.8"/>
<polyline points="445.2,30.1 448.2,43.9 453.4,57.1 457.0,70.8 455.3,84.9 453.9,99.0 450.3,112.7 443.7,125.3" fill="none" stroke="#eea08a" stroke-width="0.8"/>
<polyline points="446.4,49.9 440.1,41.1 435.1,31.4 427.6,23.6 418.2,18.1" fill="none" stroke="#eea08a" stroke-width="0.8"/>
<polyline points="404.7,72.7 391.3,65.7 377.4,59.7 366.2,49.7" fill="none" stroke="#eea08a" stroke-width="0.8"/>
<polyline points="392.5,9.7 377.5,11.0 362.6,10.6 347.8,13.4 332.8,13.6 317.9,14.9 304.0,20.3" fill="none" stroke="#eea08a" stroke-width="0.8"/>
<polyline points="594.8,169.4 605.7,178.0 618.8,182.7 629.4,191.6 641.6,198.2 653.8,204.7 667.5,207.2 681.3,207.8 694.4,203.1" fill="none" stroke="#eea08a" stroke-width="0.8"/>
<polyline points="447.8,82.2 446.3,95.1 447.9,108.0 448.9,121.0 449.3,133.9 453.3,146.3 461.7,156.2 467.9,167.6" fill="none" stroke="#eea08a" stroke-width="0.8"/>
<polyline points="398.5,100.4 407.8,98.0 417.3,98.3 426.9,98.6 436.4,98.2 445.8,100.1 455.2,101.2 464.5,99.0 473.9,97.1" fill="none" stroke="#eea08a" stroke-width="0.8"/>
<polyline points="436.3,36.1 435.5,50.9 431.1,65.0 425.9,78.9 416.3,90.1 411.3,104.0 402.5,115.9 390.2,124.0 377.6,131.8" fill="none" stroke="#eea08a" stroke-width="0.8"/>
<polyline points="493.8,159.3 490.2,168.1 490.2,177.6 492.5,186.9" fill="none" stroke="#eea08a" stroke-width="0.8"/>
<polyline points="443.1,48.4 455.8,41.8 467.4,33.3 479.2,25.1" fill="none" stroke="#eea08a" stroke-width="0.8"/>
<polyline points="813.2,82.7 806.6,69.9" fill="none" stroke="#eea08a" stroke-width="0.8"/>
<polyline points="376.0,65.5 374.6,56.6 371.6,48.0 372.2,39.0" fill="none" stroke="#eea08a" stroke-width="0.8"/>
<polyline points="491.2,55.9 501.1,46.8 507.7,35.0 512.6,22.5 519.9,11.2 524.3,-1.5 531.2,-13.2 538.4,-24.5 547.2,-34.7" fill="none" stroke="#eea08a" stroke-width="0.8"/>
<polyline points="384.0,76.3 392.3,84.2 401.2,91.4 412.0,95.0 423.4,95.0" fill="none" stroke="#eea08a" stroke-width="0.8"/>
<polyline points="711.2,-0.5 722.1,9.7 732.2,20.6 741.7,32.1 752.6,42.1 763.8,51.9 770.9,65.0 778.1,78.1" fill="none" stroke="#eea08a" stroke-width="0.8"/>
<polyline points="738.8,10.2 724.5,15.5 709.3,16.3 694.3,13.6 679.4,10.7 664.5,13.7 649.3,13.9 634.2,12.2 620.4,5.6" fill="none" stroke="#eea08a" stroke-width="0.8"/>
<polyline points="632.8,188.5 640.1,181.0 647.4,173.5 655.2,166.4" fill="none" stroke="#eea08a" stroke-width="0.8"/>
<polyline points="698.9,157.2 689.9,161.3 680.2,162.9 670.5,164.4" fill="none" stroke="#eea08a" stroke-width="0.8"/>
<polyline points="609.3,107.3 621.9,111.3 634.6,114.7 647.1,119.1 659.2,124.3 668.8,133.4 680.5,139.5" fill="none" stroke="#eea08a" stroke-width="0.8"/>
<polyline points="438.2,130.8 442.8,141.1" fill="none" stroke="#eea08a" stroke-width="0.8"/>
<polyline points="368.4,210.8 353.9,214.8 338.8,214.8 323.9,212.9" fill="none" stroke="#eea08a" stroke-width="0.8"/>
<polyline points="730.7,106.5 744.4,100.9 759.2,99.6 774.0,100.7 788.6,98.9" fill="none" stroke="#eea08a" stroke-width="0.8"/>
<polyline points="589.6,183.7 595.6,194.3 600.4,205.5 608.6,214.5 616.4,223.8 621.9,234.7" fill="none" stroke="#eea08a" stroke-width="0.8"/>
<polyline points="339.0,103.3 351.0,112.4 358.9,125.3 370.7,134.8 378.5,147.8 382.8,162.3 390.7,175.3" fill="none" stroke="#eea08a" stroke-width="0.8"/>
<polyline points="486.7,183.5 488.8,174.5 488.4,165.3 487.3,156.1 488.8,146.9 491.0,138.0" fill="none" stroke="#eea08a" stroke-width="0.8"/>
<polyline points="639.8,186.1 636.2,177.3 633.9,168.1 631.1,159.0 625.0,151.7 618.1,145.2 610.2,139.8" fill="none" stroke="#eea08a" stroke-width="0.8"/>
<polyline points="134.6,0.0 133.4,51.8 139.8,58.2 262.7,104.0 295.6,116.3" fill="none" stroke="#a39bb0" stroke-width="1.6"/>
<polyline points="274.0,0.0 290.0,25.0 296.0,52.0 296.4,208.0" fill="none" stroke="#a39bb0" stroke-width="1.6"/>
<polyline points="773.5,0.0 831.7,59.5 848.5,208.0" fill="none" stroke="#a39bb0" stroke-width="1.6"/>
<polyline points="88.0,135.0 75.6,142.6 63.2,184.0 63.2,195.0 57.8,208.0" fill="none" stroke="#a39bb0" stroke-width="1.6"/>
<polyline points="88.0,135.0 100.0,141.0 101.8,156.5 95.6,184.0 97.0,199.7 102.6,208.0" fill="none" stroke="#a39bb0" stroke-width="1.6"/>
<polyline points="428.0,156.0 428.0,208.0" fill="none" stroke="#a39bb0" stroke-width="1.6"/>
<polyline points="410.0,168.0 448.0,168.0" fill="none" stroke="#a39bb0" stroke-width="1.6"/>
<polyline points="296.0,128.0 312.0,128.0" fill="none" stroke="#a39bb0" stroke-width="1.6"/>
<polyline points="795.0,48.0 812.0,40.0" fill="none" stroke="#a39bb0" stroke-width="1.6"/>
<polyline points="815.0,80.0 830.0,78.0" fill="none" stroke="#a39bb0" stroke-width="1.6"/>
<polyline points="828.0,150.0 842.0,150.0" fill="none" stroke="#a39bb0" stroke-width="1.6"/>
<ellipse cx="115.6" cy="89" rx="12" ry="13.5" fill="none" stroke="#a39bb0" stroke-width="1.6"/>
<ellipse cx="102" cy="125" rx="13.5" ry="15" fill="none" stroke="#a39bb0" stroke-width="1.6"/>
<ellipse cx="146" cy="155" rx="10.5" ry="10.5" fill="none" stroke="#a39bb0" stroke-width="1.6"/>
<ellipse cx="128" cy="212" rx="10" ry="10" fill="none" stroke="#a39bb0" stroke-width="1.6"/>
<polyline points="357.0,0.0 358.0,15.5 343.0,33.6 341.6,62.0 327.4,72.5 326.0,92.5 338.4,108.0 355.5,122.6 371.0,158.0 366.0,170.4 374.0,189.0 383.3,208.0" fill="none" stroke="#a897aa" stroke-width="2" stroke-linejoin="round"/>
<polyline points="535.3,208.0 522.4,181.6 514.6,149.3 523.0,145.4 541.3,119.5 546.5,114.3 585.8,113.0 620.0,109.5 632.4,110.5 641.7,114.0 651.0,108.0 657.0,100.3 658.7,89.5 655.6,78.7 660.0,72.5 657.0,66.3 661.8,61.7 663.3,51.0 654.0,41.6 651.0,35.5 635.5,29.3 623.2,9.3 617.0,0.0" fill="none" stroke="#a897aa" stroke-width="2" stroke-linejoin="round"/>
<polyline points="641.7,114.0 645.3,120.8 671.2,126.0 684.0,133.8 689.3,127.3 681.5,115.6 678.7,112.6 689.5,106.4 705.0,101.8 717.3,114.0 735.8,111.0 746.6,98.7 752.8,77.0 751.2,64.8 743.5,55.5 735.8,43.2 743.5,32.4 731.2,20.0 720.4,9.3 708.0,0.0" fill="none" stroke="#a897aa" stroke-width="2" stroke-linejoin="round"/>
<polyline points="746.6,98.7 743.5,124.0 740.0,150.0 745.0,180.0 751.8,208.0" fill="none" stroke="#a897aa" stroke-width="2" stroke-linejoin="round"/>
<circle cx="302" cy="12" r="1.8" fill="#fff" stroke="#555" stroke-width="0.8"/>
<circle cx="547" cy="5" r="1.8" fill="#fff" stroke="#555" stroke-width="0.8"/>
<circle cx="628" cy="3" r="1.8" fill="#fff" stroke="#555" stroke-width="0.8"/>
<circle cx="751.5" cy="13" r="1.8" fill="#fff" stroke="#555" stroke-width="0.8"/>
<circle cx="392" cy="56" r="1.8" fill="#fff" stroke="#555" stroke-width="0.8"/>
<circle cx="628" cy="72" r="1.8" fill="#fff" stroke="#555" stroke-width="0.8"/>
<circle cx="660" cy="80" r="1.8" fill="#fff" stroke="#555" stroke-width="0.8"/>
<circle cx="432.8" cy="113.2" r="1.8" fill="#fff" stroke="#555" stroke-width="0.8"/>
<circle cx="566.6" cy="121" r="1.8" fill="#fff" stroke="#555" stroke-width="0.8"/>
<circle cx="653" cy="136" r="1.8" fill="#fff" stroke="#555" stroke-width="0.8"/>
<circle cx="502" cy="163" r="1.8" fill="#fff" stroke="#555" stroke-width="0.8"/>
<circle cx="565" cy="174" r="1.8" fill="#fff" stroke="#555" stroke-width="0.8"/>
<circle cx="580" cy="166" r="1.8" fill="#fff" stroke="#555" stroke-width="0.8"/>
<circle cx="520" cy="186" r="1.8" fill="#fff" stroke="#555" stroke-width="0.8"/>
<circle cx="600" cy="196" r="1.8" fill="#fff" stroke="#555" stroke-width="0.8"/>
<circle cx="772" cy="130.6" r="1.8" fill="#fff" stroke="#555" stroke-width="0.8"/>
<circle cx="830.4" cy="172" r="1.8" fill="#fff" stroke="#555" stroke-width="0.8"/>
<circle cx="772" cy="191.4" r="1.8" fill="#fff" stroke="#555" stroke-width="0.8"/>
<circle cx="826.5" cy="139.6" r="1.8" fill="#fff" stroke="#555" stroke-width="0.8"/>
<circle cx="808.4" cy="76.8" r="1.8" fill="#fff" stroke="#555" stroke-width="0.8"/>
<circle cx="465" cy="196" r="1.8" fill="#fff" stroke="#555" stroke-width="0.8"/>
<circle cx="686" cy="114" r="1.8" fill="#fff" stroke="#555" stroke-width="0.8"/>
</svg>
<div class="ml" style="left:211px;top:1px;font-size:12px;color:#333">ရန်ကုန်</div>
<div class="ml" style="left:274px;top:-3px;font-size:11px;color:#333">မော်လမြိုင်</div>
<div class="ml" style="left:334px;top:4px;font-size:9.5px;color:#8a6d8e">จังหวัดตาก</div>
<div class="ml" style="left:519px;top:0px;font-size:10px;color:#333">ขอนแก่น</div>
<div class="ml" style="left:566px;top:1px;font-size:10px;color:#333">สะหวันนะเขต</div>
<div class="ml" style="left:640px;top:4px;font-size:9.5px;color:#8a6d8e">สะหวันนะเขต</div>
<div class="ml" style="left:741px;top:16px;font-size:13px;color:#333">Huế</div>
<div class="ml" style="left:672px;top:37px;font-size:11px;color:#333">Muang</div>
<div class="ml" style="left:665px;top:49px;font-size:11px;color:#333">Toumlane</div>
<div class="ml" style="left:748px;top:38px;font-size:13px;color:#8a6d8e">Việt Nam</div>
<div class="ml" style="left:391px;top:49px;font-size:10px;color:#333">นครสวรรค์</div>
<div class="ml" style="left:604px;top:58px;font-size:10px;color:#333">อุบลราชธานี</div>
<div class="ml" style="left:660px;top:78px;font-size:10px;color:#333">ປາກເຊ</div>
<div class="ml" style="left:791px;top:80px;font-size:11px;color:#333">Quảng</div>
<div class="ml" style="left:796px;top:92px;font-size:11px;color:#333">Ngãi</div>
<div class="ml" style="left:323px;top:91px;font-size:9.2px;color:#8a6d8e">จังหวัดกาญจนบุรี</div>
<div class="ml" style="left:460px;top:77px;font-size:9.2px;color:#8a6d8e">จังหวัดนครราชสีมา</div>
<div class="ml" style="left:437px;top:106px;font-size:9.3px;color:#333">พระนครศรีอยุธยา</div>
<div class="ml" style="left:547px;top:106px;font-size:10px;color:#333">ក្រុងសំរោង</div>
<div class="ml" style="left:759px;top:116px;font-size:11px;color:#333">Pleiku</div>
<div class="ml" style="left:804px;top:127px;font-size:11px;color:#333">Quy Nhơn</div>
<div class="ml" style="left:307px;top:121px;font-size:11px;color:#333">ထားဝယ်</div>
<div class="ml" style="left:316px;top:137px;font-size:11px;color:#333">မြို့</div>
<div class="ml" style="left:512px;top:133px;font-size:10px;color:#333">ក្រុងសិរីសោភ័ណ</div>
<div class="ml" style="left:610px;top:123px;font-size:10px;color:#333">ក្រុងព្រះវិហារ</div>
<div class="ml" style="left:536px;top:156px;font-size:10px;color:#333">បាត់ដំបង</div>
<div class="ml" style="left:587px;top:153px;font-size:10px;color:#333">ក្រុងសៀមរាប</div>
<div class="ml" style="left:415px;top:168px;font-size:12.3px;color:#8a6d8e">ประเทศไทย</div>
<div class="ml" style="left:833px;top:164px;font-size:13px;color:#333">Tuy H</div>
<div class="ml" style="left:730px;top:176px;font-size:13px;color:#333">Buôn Ma Thuột</div>
<div class="ml" style="left:451px;top:191px;font-size:10px;color:#333">ระยอง</div>
<div class="ml" style="left:505px;top:183px;font-size:10px;color:#333">ក្រុងប៉ៃលិន</div>
<div class="ml" style="left:560px;top:182px;font-size:10px;color:#333">ក្រុងពោធិ៍សាត់</div>
<div class="ml" style="left:663px;top:184px;font-size:10px;color:#333">ក្រុងក្រចេះ</div>
<div class="ml" style="left:314px;top:196px;font-size:10.5px;color:#8a6d8e;font-style:italic">Tanintharyi</div>
<div style="position:absolute;left:5px;top:4px;width:48px;height:48px;border-radius:50%;background:#fff;box-shadow:0 0 0 1px #aaa,0 1px 2px rgba(0,0,0,.3)">
<svg width="48" height="48" viewBox="0 0 48 48" style="position:absolute;left:0;top:0"><path d="M19.5 10 L24 5.5 L28.5 10 M19.5 38 L24 42.5 L28.5 38 M10 19.5 L5.5 24 L10 28.5 M38 19.5 L42.5 24 L38 28.5" fill="none" stroke="#2a8ad8" stroke-width="2.6"/><text x="24" y="29" text-anchor="middle" font-size="14" font-weight="bold" fill="#2a8ad8" font-family="Liberation Serif">6</text></svg></div>
<div style="position:absolute;left:10px;top:76px;width:39px;height:78px;border-radius:20px;background:linear-gradient(90deg,#fff 50%,#e6e6e6);box-shadow:0 0 0 1px #999,0 3px 3px rgba(0,0,0,.35)">
<div style="position:absolute;left:0;top:39px;width:39px;height:1px;background:#ccc"></div>
<svg width="39" height="78" viewBox="0 0 39 78" style="position:absolute;left:0;top:0"><path d="M12 24 H27 M19.5 16.5 V31.5 M12 57 H27" stroke="#2a8ad8" stroke-width="2.2"/></svg></div>
<div style="position:absolute;left:354px;top:122px;width:154px;height:34px;border:1px solid #333;border-radius:5px;background:#fff;font-size:13.3px;color:#333;line-height:32px;text-align:center">ไม่พบพิกัดโครงการ</div>
</div>
</div>
</body></html>
